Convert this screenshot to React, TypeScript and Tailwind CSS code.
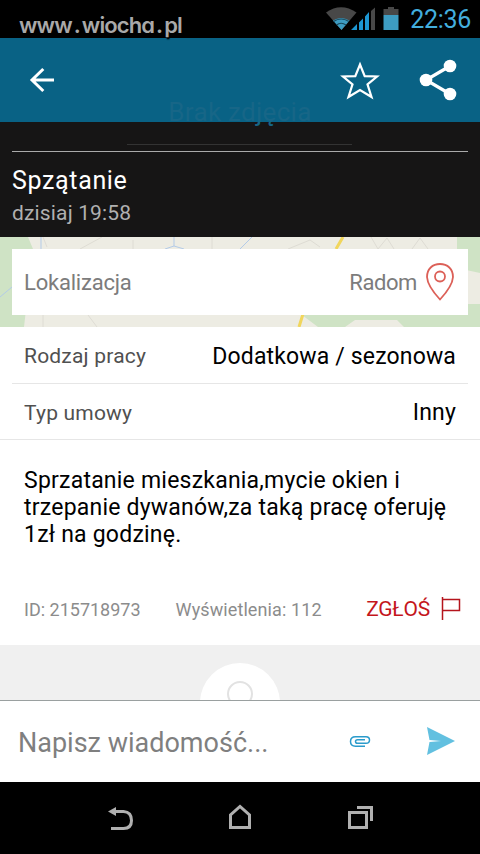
import { ReactNode } from "react";

function StatusBar() {
	return (
		<div className="relative z-10 flex h-[38px] shrink-0 items-start bg-black">
			<div className="pl-[19px] pt-[10px] font-['Inter'] text-[22px] font-semibold leading-[30px] tracking-[-0.9px] text-[#a9a9a9] [font-feature-settings:'cv11'] [text-shadow:1px_2px_1px_#000]">
				www<span className="mx-[2px]">.</span>wiocha<span className="mx-[2px]">.</span>pl
			</div>
			<svg className="absolute left-[324px] top-0" width="80" height="38" viewBox="324 0 80 38">
				<path d="M326 12.5Q341 2 356.500 12.500L341.500 30Z" fill="#484848" />
				<path d="M333 20.5Q341 15.500 349.500 20.500L341.500 30Z" fill="#3d9cc2" />
				<path d="M333.500 21.500Q341 16.500 349 21.500M336.500 25Q341 21.500 346 25" fill="none" stroke="#17485c" strokeWidth="1.2" />
				<path d="M351 30L357 24V30ZM359 22.500L363 18.500V30H359ZM365 16.500L369 12V30H365Z" fill="#1d96d2" />
				<path d="M371 11L375 7.500V30H371Z" fill="#484848" />
				<path d="M383.500 15V9H388V7H394V9H398.500V15Z" fill="#484848" />
				<path d="M383.500 15H398.500V30H383.500Z" fill="#3d9cc2" />
			</svg>
			<div className="ml-auto pr-[9px] pt-[5px] text-[25px] leading-[30px] tracking-[-0.3px] text-[#43aede]">22:36</div>
		</div>
	);
}

function Header() {
	return (
		<div className="relative flex h-[84px] shrink-0 items-center bg-[#096285]">
			<div className="absolute left-0 top-[59px] w-[480px] text-center text-[26px] leading-[30px] tracking-[0.3px] text-[#176687]">Brak zdjęcia</div>
			<svg className="ml-[29px]" width="28" height="28" viewBox="29 66 28 28" fill="none" stroke="#fff" strokeWidth="3">
				<path d="M54 80H32M43.300 69L32 80L43.300 91" />
			</svg>
			<svg className="ml-auto" width="44" height="44" viewBox="338 58 44 44" fill="none" stroke="#fff" strokeWidth="2.2">
				<path d="M360 64.500L364.700 76.100L377 76.500L367.500 84.300L371.500 97L360 90L348.500 97L352.500 84.300L343 76.500L355.300 76.100Z" />
			</svg>
			<svg className="ml-[34px] mr-[20px]" width="44" height="44" viewBox="416 58 44 44" fill="#fff">
				<path d="M450 66L426 80L450 94" fill="none" stroke="#fff" strokeWidth="3.2" />
				<circle cx="450" cy="66" r="6.300" />
				<circle cx="426" cy="80" r="6.300" />
				<circle cx="450" cy="94" r="6.300" />
			</svg>
		</div>
	);
}

function MapBackground() {
	return (
		<svg className="absolute inset-0" width="480" height="90" viewBox="0 237 480 90" fill="none">
			<path d="M0 237H480V327H0Z" fill="#edece3" />
			<path d="M0 237H28L33 249L24 327H0ZM457 237H480V273L457 268ZM302 315H468V304H480V327H404L397 320H355L345 327H318Z" fill="#cfe3c5" />
			<path d="M0 297L12 287M41 237V250M174 237V246M165 249L174 246L184 249M252 237L240 249" stroke="#b3cbe8" />
			<path d="M43 237L47 247M102 237L80 249M133 240V249M212 237V249M43 315V327M88 315L97 327M288 249L310 240L320 247M371 237L378 249L387 238L394 249M412 249L420 238L428 249" stroke="#dedcd4" />
			<path d="M343 237L336 249M303 314L299 327" stroke="#f1d65c" strokeWidth="3" />
		</svg>
	);
}

function Row({ label, children }: { label: string; children: ReactNode }) {
	return (
		<div className="flex flex-1 items-center justify-between px-3 pt-[4px]">
			<span className="text-[21px] tracking-[0.2px] text-[#505050]">{label}</span>
			<span className="text-[23px] tracking-[0.15px] text-black">{children}</span>
		</div>
	);
}

function NavBar() {
	return (
		<div className="flex h-[72px] shrink-0 items-center justify-center gap-[80px] bg-black">
			<svg width="40" height="40" viewBox="100 798 40 40">
				<path d="M108 811.500L116 807V816Z" fill="#b0b0b0" />
				<path d="M114 811.500H123.500Q131.500 812 131.500 820.500Q131.500 828.500 123.500 828.500H111" fill="none" stroke="#b0b0b0" strokeWidth="3" />
			</svg>
			<svg width="40" height="40" viewBox="220 798 40 40" fill="none" stroke="#b0b0b0" strokeWidth="3">
				<path d="M230.500 827.500V815L240 806.500L249.500 815V827.500Z" />
			</svg>
			<svg width="40" height="40" viewBox="340 798 40 40" fill="none" stroke="#b0b0b0" strokeWidth="3">
				<path d="M349.500 812.500H366.500V827.500H349.500ZM357 807.500H371.500V821" />
			</svg>
		</div>
	);
}

export default function App() {
	return (
		<main className="flex h-[854px] w-[480px] flex-col overflow-hidden bg-white font-['Roboto',sans-serif]">
			<StatusBar />
			<Header />

			<div className="flex h-[115px] shrink-0 flex-col bg-[#161515] px-3 pt-[22px]">
				<div className="ml-[115px] h-px w-[225px] bg-[#333]" />
				<div className="mt-[6px] h-px bg-[#aaa]" />
				<div className="mt-[14px] text-[25px] leading-[30px] tracking-[0.65px] text-white">Spzątanie</div>
				<div className="mt-[3px] text-[21px] leading-[28px] tracking-[0.15px] text-[#b0b0b0]">dzisiaj 19:58</div>
			</div>

			<div className="relative h-[90px] shrink-0 p-3">
				<MapBackground />
				<div className="relative flex h-[66px] items-center bg-white px-3 text-[22px] tracking-[-0.2px] text-[#7c7c7c]">
					<span>Lokalizacja</span>
					<span className="ml-auto tracking-[-0.4px]">Radom</span>
					<svg className="ml-[7px]" width="32" height="42" viewBox="423.500 261 32 42" fill="none" stroke="#dc6058" strokeWidth="1.800">
						<path d="M439.500 299.500Q427 286 426.500 277C426.500 269 432 264 439.500 264S452.500 269 452.500 277Q452 286 439.500 299.500Z" />
						<circle cx="439.500" cy="276.500" r="5" />
					</svg>
				</div>
			</div>

			<div className="flex h-[113px] shrink-0 flex-col border-b border-[#e6e6e6] px-3">
				<Row label="Rodzaj pracy">Dodatkowa / sezonowa</Row>
				<div className="h-px bg-[#e6e6e6]" />
				<Row label="Typ umowy">Inny</Row>
			</div>

			<div className="flex h-[205px] shrink-0 flex-col justify-between px-6 pb-[20px] pt-[27px]">
				<p className="whitespace-nowrap text-[23px] leading-[27px] tracking-[0.22px] text-black">
					Sprzatanie mieszkania,mycie okien i<br />
					trzepanie dywanów,za taką pracę oferuję<br />
					1zł na godzinę.
				</p>
				<div className="-mr-[6px] flex h-[32px] items-center whitespace-nowrap text-[18px] text-[#8c8c8c]">
					<span>ID: 215718973</span>
					<span className="ml-[35px] tracking-[0.1px]">Wyświetlenia: 112</span>
					<span className="ml-auto pt-[2px] text-[21px] tracking-[-0.2px] text-[#c4161c]">ZGŁOŚ</span>
					<svg className="ml-[10px]" width="22" height="26" viewBox="440 596 22 26" fill="none" stroke="#b5141c" strokeWidth="1.500">
						<path d="M442.500 597V620M442.500 599.500H459.500V610.500H442.500" />
					</svg>
				</div>
			</div>

			<div className="flex h-[55px] shrink-0 justify-center overflow-hidden bg-[#f0f0f0] pt-[18px]">
				<div className="flex size-20 shrink-0 justify-center rounded-full bg-white pt-[18px]">
					<div className="size-[26px] rounded-full border-2 border-[#e2e2e2]" />
				</div>
			</div>

			<div className="flex h-[82px] shrink-0 items-center border-t border-[#9aa0a0] pl-[18px] pr-[24px]">
				<span className="whitespace-nowrap pt-[3px] text-[27px] text-[#7f7f7f]">Napisz wiadomość...</span>
				<svg className="ml-auto" width="24" height="16" viewBox="348 734 24 16" fill="none" stroke="#2a9bcb" strokeWidth="1.500">
					<path d="M365 746.200H355.500Q350.500 746.200 350.500 741.500Q350.500 736.700 355.500 736.700H366Q369.500 736.700 369.500 740Q369.500 743.300 366 743.300H357.500Q355.500 743.300 355.500 741.500Q355.500 739.700 357.500 739.700H365" />
				</svg>
				<svg className="ml-[52px]" width="32" height="32" viewBox="424 726 32 32" fill="#62c0e0">
					<path d="M427 727L455 741L427 755L429.500 742L441 741L429.500 740Z" />
				</svg>
			</div>

			<NavBar />
		</main>
	);
}
